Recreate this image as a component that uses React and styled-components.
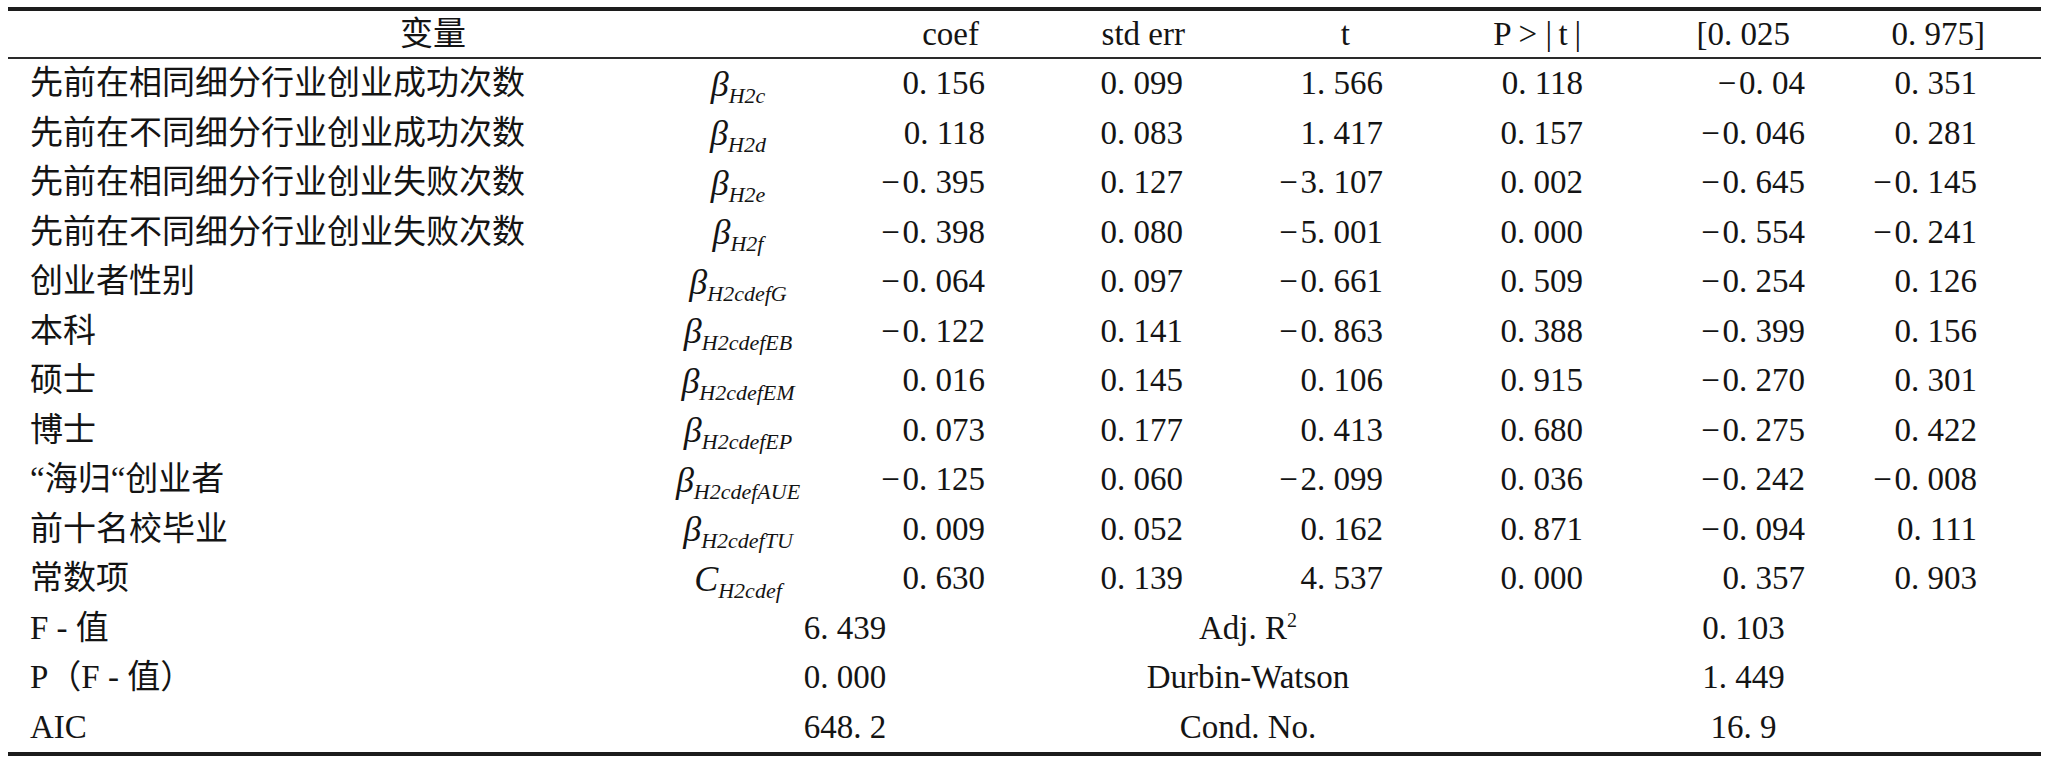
import styled, { createGlobalStyle } from 'styled-components';

const GlobalStyle = createGlobalStyle`
  html, body {
    margin: 0;
    padding: 0;
    background: #fff;
  }
  body {
    font-family: 'Liberation Serif', 'Noto Sans CJK SC', serif;
    color: #141414;
  }
`;

const COLS = '632px 196px 174px 198px 200px 200px 222px 172px 1fr';

const coefRows = [
  ['先前在相同细分行业创业成功次数', 'β', 'H2c', '0.156', '0.099', '1.566', '0.118', '-0.04', '0.351'],
  ['先前在不同细分行业创业成功次数', 'β', 'H2d', '0.118', '0.083', '1.417', '0.157', '-0.046', '0.281'],
  ['先前在相同细分行业创业失败次数', 'β', 'H2e', '-0.395', '0.127', '-3.107', '0.002', '-0.645', '-0.145'],
  ['先前在不同细分行业创业失败次数', 'β', 'H2f', '-0.398', '0.080', '-5.001', '0.000', '-0.554', '-0.241'],
  ['创业者性别', 'β', 'H2cdefG', '-0.064', '0.097', '-0.661', '0.509', '-0.254', '0.126'],
  ['本科', 'β', 'H2cdefEB', '-0.122', '0.141', '-0.863', '0.388', '-0.399', '0.156'],
  ['硕士', 'β', 'H2cdefEM', '0.016', '0.145', '0.106', '0.915', '-0.270', '0.301'],
  ['博士', 'β', 'H2cdefEP', '0.073', '0.177', '0.413', '0.680', '-0.275', '0.422'],
  ['“海归“创业者', 'β', 'H2cdefAUE', '-0.125', '0.060', '-2.099', '0.036', '-0.242', '-0.008'],
  ['前十名校毕业', 'β', 'H2cdefTU', '0.009', '0.052', '0.162', '0.871', '-0.094', '0.111'],
  ['常数项', 'C', 'H2cdef', '0.630', '0.139', '4.537', '0.000', '0.357', '0.903'],
];

const statRows = [
  ['F - 值', '6.439', <>Adj. R<sup>2</sup></>, '0.103'],
  ['P（F - 值）', '0.000', 'Durbin-Watson', '1.449'],
  ['AIC', '648.2', 'Cond. No.', '16.9'],
];

// journal style: "0. 156", "− 0. 395"
const fmt = s => s.replace('.', '. ').replace(/^-/, '\u2212\u200A');

const App = () => {
  return (
    <Page>
      <GlobalStyle />
      <Table>
        <HeadRow>
          <HeadName>变量</HeadName>
          <HeadCell $pr={31}>coef</HeadCell>
          <HeadCell $pr={23}>std err</HeadCell>
          <HeadCell $pr={58}>t</HeadCell>
          <HeadCell $pr={27}>P &gt; |{'\u2009'}t{'\u2009'}|</HeadCell>
          <HeadCell $pr={40}>[0. 025</HeadCell>
          <HeadCell $pr={17}>0. 975]</HeadCell>
        </HeadRow>
        {coefRows.map(([name, sym, sub, ...nums]) => (
          <Row key={name}>
            <Name>{name}</Name>
            <Sym>
              {sym}
              <sub>{sub}</sub>
            </Sym>
            {nums.map((n, i) => (
              <Num key={i}>{fmt(n)}</Num>
            ))}
          </Row>
        ))}
        {statRows.map(([label, value, label2, value2]) => (
          <StatRow key={label}>
            <Name>{label}</Name>
            <StatCell>{fmt(value)}</StatCell>
            <StatCell>{label2}</StatCell>
            <StatCell>{fmt(value2)}</StatCell>
          </StatRow>
        ))}
      </Table>
    </Page>
  );
};

export default App;

const Page = styled.div`
  width: 2048px;
  box-sizing: border-box;
  padding: 7px 7px 0 8px;
`;

const Table = styled.div`
  border-top: 4px solid #1c1c1c;
  border-bottom: 4px solid #1c1c1c;
`;

const HeadRow = styled.div`
  display: grid;
  grid-template-columns: ${COLS};
  align-items: center;
  height: 46px;
  border-bottom: 2px solid #2a2a2a;
  font-size: 33px;
  line-height: 1;
`;

const HeadName = styled.div`
  grid-column: span 2;
  padding-left: 22px;
  text-align: center;
  font-size: 33px;
`;

const HeadCell = styled.div`
  text-align: right;
  padding-right: ${p => p.$pr}px;
  white-space: nowrap;
`;

const Row = styled.div`
  display: grid;
  grid-template-columns: ${COLS};
  align-items: center;
  height: 49.5px;
  font-size: 33px;
  line-height: 1;
`;

const StatRow = styled(Row)`
  grid-template-columns: 632px 410px 396px 1fr;

  & sup {
    font-size: 20px;
    vertical-align: 12px;
    line-height: 0;
  }
`;

const Name = styled.div`
  padding-left: 22px;
  font-size: 33px;
  white-space: nowrap;
`;

const Sym = styled.div`
  text-align: center;
  font-style: italic;
  font-size: 36px;
  white-space: nowrap;

  & sub {
    font-size: 22px;
    vertical-align: -7px;
    line-height: 0;
  }
`;

const Num = styled.div`
  text-align: right;
  padding-right: 25px;
  white-space: nowrap;
`;

const StatCell = styled.div`
  text-align: center;
  white-space: nowrap;
`;
